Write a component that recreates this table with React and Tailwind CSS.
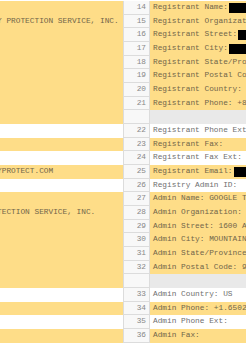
import React from "react";

const Y = "bg-[#fedd88]";
const W = "bg-white";
const G = "bg-[#e9e9e9]";

const rows = [
  { lb: Y, lt: "", n: "14", t: "Registrant Name:", rb: Y, box: true },
  { lb: Y, lt: "Registrant Organization: PRIVACY PROTECTION SERVICE, INC.", n: "15", t: "Registrant Organization: GOOGLE INC.", rb: Y },
  { lb: Y, lt: "", n: "16", t: "Registrant Street:", rb: Y, box: true },
  { lb: Y, lt: "", n: "17", t: "Registrant City:", rb: Y, box: true },
  { lb: Y, lt: "", n: "18", t: "Registrant State/Province: CA", rb: Y },
  { lb: Y, lt: "", n: "19", t: "Registrant Postal Code: 94043", rb: Y },
  { lb: Y, lt: "", n: "20", t: "Registrant Country: US", rb: Y },
  { lb: Y, lt: "", n: "21", t: "Registrant Phone: +8.6502530000", rb: Y },
  { lb: Y, lt: "", n: "", t: "", rb: G },
  { lb: W, lt: "", n: "22", t: "Registrant Phone Ext:", rb: W },
  { lb: Y, lt: "", n: "23", t: "Registrant Fax:", rb: Y },
  { lb: W, lt: "", n: "24", t: "Registrant Fax Ext:", rb: W },
  { lb: Y, lt: "Registrant Email: DOMAIN@PRIVACYPROTECT.COM", n: "25", t: "Registrant Email:", rb: Y, box: true },
  { lb: W, lt: "", n: "26", t: "Registry Admin ID:", rb: W },
  { lb: Y, lt: "", n: "27", t: "Admin Name: GOOGLE TEAM", rb: Y },
  { lb: Y, lt: "Admin Organization: PRIVACY PROTECTION SERVICE, INC.", n: "28", t: "Admin Organization: GOOGLE INC.", rb: Y },
  { lb: Y, lt: "", n: "29", t: "Admin Street: 1600 Amphitheatre Parkway", rb: Y },
  { lb: Y, lt: "", n: "30", t: "Admin City: MOUNTAIN VIEW", rb: Y },
  { lb: Y, lt: "", n: "31", t: "Admin State/Province: CA", rb: Y },
  { lb: Y, lt: "", n: "32", t: "Admin Postal Code: 94043", rb: Y },
  { lb: Y, lt: "", n: "", t: "", rb: G },
  { lb: W, lt: "", n: "33", t: "Admin Country: US", rb: W },
  { lb: Y, lt: "", n: "34", t: "Admin Phone: +1.6502530000", rb: Y },
  { lb: W, lt: "", n: "35", t: "Admin Phone Ext:", rb: W },
  { lb: Y, lt: "", n: "36", t: "Admin Fax:", rb: Y },
];

const mono = { fontFamily: '"Liberation Mono", "Courier New", monospace' };

export default function App() {
  return (
    <div className="w-[246px] h-[344px] overflow-hidden bg-white pt-[1.17px]" style={mono}>
      {rows.map((r, i) => (
        <div key={i} className="flex h-[13.667px] text-[7.8px] leading-[13.667px]">
          <div className={`w-[123px] shrink-0 overflow-hidden whitespace-pre ${r.lb} ${r.lb === Y ? "text-[#72664a]" : "text-[#6f6f6f]"}`}>
            {r.lt && <span className="block ml-[-148px]">{r.lt}</span>}
          </div>
          <div className="w-[27px] shrink-0 bg-[#f8f8f8] border-l border-r border-b border-[#dcdcdc] text-right pr-[3px] text-[#888] box-border">
            {r.n}
          </div>
          <div className={`flex-1 min-w-0 flex items-center overflow-hidden whitespace-pre pl-[3px] ${r.rb} ${r.rb === Y ? "text-[#72664a]" : "text-[#6f6f6f]"}`}>
            <span>{r.t}</span>
            {r.box && <span className="shrink-0 w-[30px] h-[10px] bg-black ml-[1px]" />}
          </div>
        </div>
      ))}
    </div>
  );
}
